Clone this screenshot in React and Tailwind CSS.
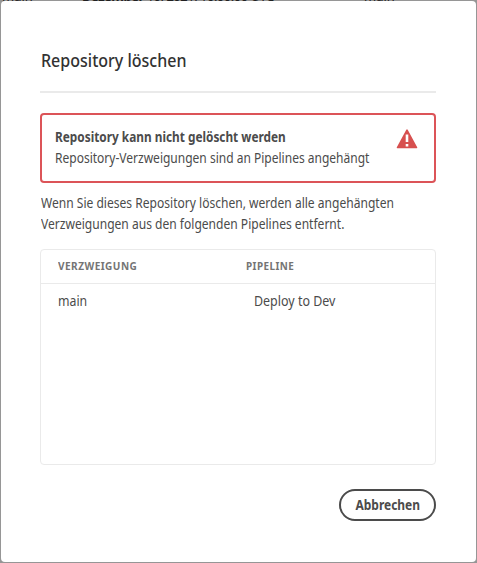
function Backdrop() {
  return (
    <div className="absolute inset-x-0 top-0 h-px overflow-hidden bg-[#969696] text-[13px] leading-[16px] text-[#202020]">
      <div className="-mt-[12px] flex whitespace-nowrap">
        <span className="w-[82px] shrink-0 pl-[2px]">main</span>
        <span className="w-[274px] shrink-0 tracking-[-0.5px]"><b>Dezember</b> 10, 2021, 10:00:00 UTC</span>
        <span className="pl-[8px]">main</span>
      </div>
    </div>
  );
}

function AlertIcon() {
  return (
    <svg className="mt-[14px] mr-[16px] h-[20px] w-[22px] shrink-0" viewBox="0 0 22 20" aria-hidden="true">
      <path d="M10.3.7.8 18.2a.7.7 0 0 0 .6 1h19.2a.7.7 0 0 0 .6-1L11.7.7a.8.8 0 0 0-1.4 0Z" fill="#d7504f" />
      <path d="M9.7 5.6h2.6v7.4H9.7zM9.7 15h2.6v2.5H9.7z" fill="#fff" />
    </svg>
  );
}

export default function App() {
  return (
    <div className="relative h-[563px] w-[477px] overflow-hidden bg-[#969696] p-px font-['Noto_Sans','Open_Sans',sans-serif] text-[14px] text-[#4b4b4b]">
      <Backdrop />
      <main role="dialog" className="flex h-[561px] flex-col rounded-[4px] bg-white pr-[40px] pl-[39px]">
        <h1 className="mt-[46px] ml-[0.7px] h-[26px] origin-left scale-x-[0.89] text-[18px] leading-[26px] font-medium whitespace-nowrap text-[#323232]">
          Repository löschen
        </h1>
        <div className="mt-[18px] h-[2px] bg-[#eaeaea]" />
        <section className="mt-[20px] flex h-[70px] shrink-0 justify-between rounded-[4px] border-2 border-[#dc5458]">
          <div className="min-w-0 flex-1 pt-[11px] pl-[13px] leading-[21px] whitespace-nowrap">
            <h2 className="origin-left scale-x-[0.845] font-bold">Repository kann nicht gelöscht werden</h2>
            <p className="origin-left scale-x-[0.858]">Repository-Verzweigungen sind an Pipelines angehängt</p>
          </div>
          <AlertIcon />
        </section>
        <p className="mt-[9px] ml-[0.7px] h-[42px] origin-left scale-x-[0.861] leading-[21px] whitespace-nowrap">
          Wenn Sie dieses Repository löschen, werden alle angehängten
          <br />
          Verzweigungen aus den folgenden Pipelines entfernt.
        </p>
        <section className="mt-[15px] h-[216px] shrink-0 rounded-[4px] border border-[#eaeaea]">
          <div className="flex h-[34px] items-center border-b border-[#eaeaea] pl-[17px] text-[11px] font-bold tracking-[0.5px] text-[#747474]">
            <span className="w-[188px] origin-left scale-x-[0.915]">VERZWEIGUNG</span>
            <span className="origin-left scale-x-[0.9]">PIPELINE</span>
          </div>
          <div className="flex h-[33px] items-center pl-[17px]">
            <span className="w-[196px] origin-left scale-x-[0.88]">main</span>
            <span className="origin-left scale-x-[0.89]">Deploy to Dev</span>
          </div>
        </section>
        <button className="mt-[24px] flex h-[32px] w-[97px] shrink-0 items-center justify-center self-end rounded-full border-2 border-[#4b4b4b] pb-[2px] font-bold">
          <span className="scale-x-[0.855]">Abbrechen</span>
        </button>
      </main>
    </div>
  );
}
